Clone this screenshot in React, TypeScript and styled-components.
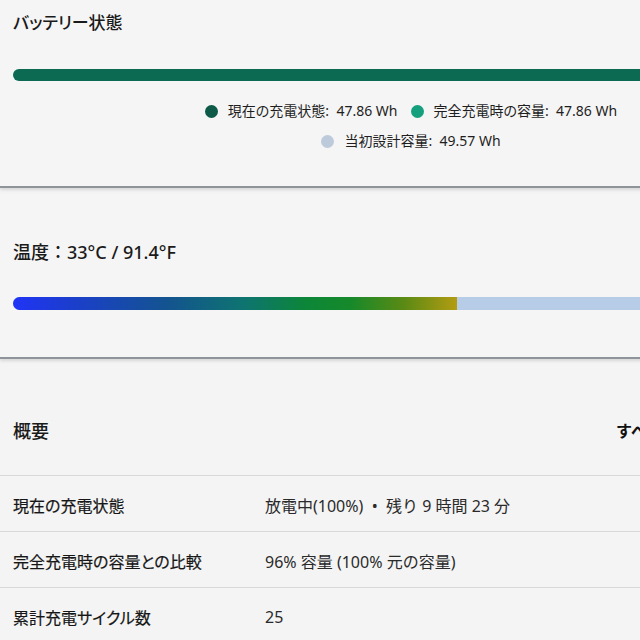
import React from "react";
import styled, { createGlobalStyle } from "styled-components";

const Global = createGlobalStyle`
  html, body { margin: 0; padding: 0; background: #f4f4f4; overflow: hidden; }
  body { font-family: "Noto Sans", "Noto Sans CJK JP", sans-serif; color: #1b1b1b; }
`;

const Viewport = styled.div`
  width: 640px;
  height: 640px;
  overflow: hidden;
`;

const Page = styled.div`
  width: 820px;
  display: flex;
  flex-direction: column;
`;

const Card = styled.section<{ $pt: number; $pb: number; $mt?: number }>`
  background: #f5f5f5;
  padding: ${(p) => p.$pt}px 13px ${(p) => p.$pb}px 13px;
  margin-top: ${(p) => p.$mt ?? 0}px;
  border-bottom: 2px solid #8f949a;
  box-shadow: 0 2px 3px rgba(0, 0, 0, 0.12);
  display: flex;
  flex-direction: column;
`;

const Title = styled.h2<{ $lh?: number; $fs?: number; $palt?: boolean }>`
  margin: 0;
  font-size: ${(p) => p.$fs ?? 17}px;
  line-height: ${(p) => p.$lh ?? 24}px;
  font-weight: 500;
  font-feature-settings: ${(p) => (p.$palt ? '"palt"' : "normal")};
  color: #1a1a1a;
`;

const Bar = styled.div<{ $mt: number; $h: number }>`
  margin-top: ${(p) => p.$mt}px;
  height: ${(p) => p.$h}px;
  border-radius: ${(p) => p.$h / 2}px 0 0 ${(p) => p.$h / 2}px;
  overflow: hidden;
  display: flex;
`;

const SolidBar = styled(Bar)`
  background: #0c6a53;
`;

const Track = styled(Bar)`
  background: #b6cce7;
`;

const Fill = styled.div`
  height: 100%;
  background: linear-gradient(
    90deg,
    #2034f6 0%,
    #1c3dd0 12%,
    #13548f 35%,
    #0e7470 52%,
    #0c8638 66%,
    #16892a 76%,
    #5a8a14 88%,
    #b39c12 100%
  );
`;

const Legend = styled.div`
  margin-top: 20px;
  width: 792px;
  display: flex;
  flex-direction: column;
  align-items: center;
  gap: 10px;
`;

const LegendRow = styled.div`
  display: flex;
  gap: 13px;
  transform: translateX(2px);
`;

const LegendItem = styled.div`
  display: flex;
  align-items: center;
  gap: 10px;
  font-size: 14px;
  line-height: 20px;
  font-weight: 400;
  font-feature-settings: "palt";
  color: #1e1e1e;
  white-space: pre;
`;

const Dot = styled.span<{ $c: string }>`
  width: 13px;
  height: 13px;
  border-radius: 50%;
  background: ${(p) => p.$c};
  flex-shrink: 0;
`;

const Summary = styled.section`
  margin-top: 6px;
  display: flex;
  flex-direction: column;
`;

const SummaryHeader = styled.div`
  display: grid;
  grid-template-columns: 603px auto;
  align-items: center;
  padding: 52px 0 30px 13px;
  border-bottom: 1px solid #d9d9d9;
`;

const HeaderTitle = styled.h3`
  margin: 0;
  font-size: 18px;
  line-height: 28px;
  font-weight: 500;
  color: #1a1a1a;
`;

const HeaderAction = styled.span`
  font-size: 16px;
  line-height: 28px;
  font-weight: 700;
  color: #111;
  white-space: nowrap;
`;

const Row = styled.div`
  display: grid;
  grid-template-columns: 252px 1fr;
  align-items: center;
  height: 55px;
  padding-left: 13px;
  border-bottom: 1px solid #d9d9d9;
`;

const RowLabel = styled.span`
  font-size: 16px;
  font-weight: 400;
  font-feature-settings: "palt";
  color: #161616;
  padding-top: 3px;
  -webkit-text-stroke: 0.2px #161616;
`;

const RowValue = styled.span`
  font-size: 16px;
  font-weight: 400;
  color: #2a2a2a;
  padding-top: 3px;
  white-space: pre;
`;

const rows = [
  { label: "現在の充電状態", value: "放電中(100%)  •  残り 9 時間 23 分" },
  { label: "完全充電時の容量との比較", value: "96% 容量 (100% 元の容量)" },
  { label: "累計充電サイクル数", value: "25" },
];

const legendRows = [
  [
    { color: "#0d5a48", label: "現在の充電状態", value: "47.86 Wh" },
    { color: "#14a07d", label: "完全充電時の容量", value: "47.86 Wh" },
  ],
  [{ color: "#bccadc", label: "当初設計容量", value: "49.57 Wh" }],
];

export default function App() {
  return (
    <Viewport>
      <Global />
      <Page>
        <Card $pt={11} $pb={35}>
          <Title $palt>バッテリー状態</Title>
          <SolidBar $mt={34} $h={12} />
          <Legend>
            {legendRows.map((row, i) => (
              <LegendRow key={i}>
                {row.map((item) => (
                  <LegendItem key={item.label}>
                    <Dot $c={item.color} />
                    <span>
                      {item.label}:  {item.value}
                    </span>
                  </LegendItem>
                ))}
              </LegendRow>
            ))}
          </Legend>
        </Card>
        <Card $pt={45} $pb={47} $mt={6}>
          <Title $lh={26} $fs={18}>温度：33°C / 91.4°F</Title>
          <Track $mt={32} $h={13}>
            <Fill style={{ width: "444px" }} />
          </Track>
        </Card>
        <Summary>
          <SummaryHeader>
            <HeaderTitle>概要</HeaderTitle>
            <HeaderAction>すべて表示</HeaderAction>
          </SummaryHeader>
          {rows.map((r) => (
            <Row key={r.label}>
              <RowLabel>{r.label}</RowLabel>
              <RowValue>{r.value}</RowValue>
            </Row>
          ))}
        </Summary>
      </Page>
    </Viewport>
  );
}
